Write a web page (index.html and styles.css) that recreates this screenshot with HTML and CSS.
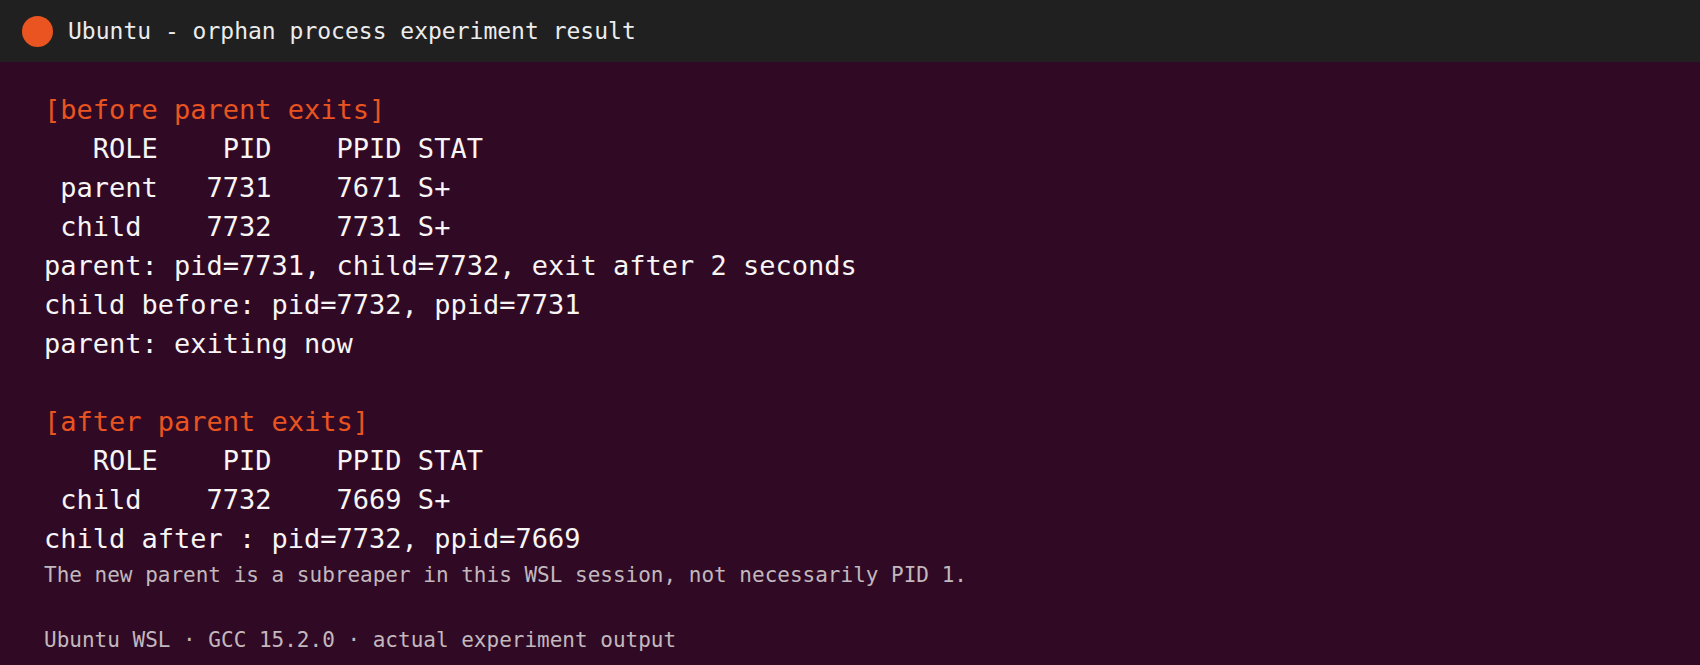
FILE: index.html
```html
<!DOCTYPE html>
<html lang="en">
<head>
<meta charset="utf-8">
<title>Ubuntu - orphan process experiment result</title>
<link rel="stylesheet" href="styles.css">
</head>
<body>
<div class="window">
  <header class="titlebar">
    <span class="dot"></span>
    <span class="title">Ubuntu - orphan process experiment result</span>
  </header>
  <main class="terminal">
    <div class="out">
      <div class="line section">[before parent exits]</div>
      <div class="line">   ROLE    PID    PPID STAT</div>
      <div class="line"> parent   7731    7671 S+</div>
      <div class="line"> child    7732    7731 S+</div>
      <div class="line">parent: pid=7731, child=7732, exit after 2 seconds</div>
      <div class="line">child before: pid=7732, ppid=7731</div>
      <div class="line">parent: exiting now</div>
      <div class="line"> </div>
      <div class="line section">[after parent exits]</div>
      <div class="line">   ROLE    PID    PPID STAT</div>
      <div class="line"> child    7732    7669 S+</div>
      <div class="line">child after : pid=7732, ppid=7669</div>
    </div>
    <p class="note">The new parent is a subreaper in this WSL session, not necessarily PID 1.</p>
    <p class="footer">Ubuntu WSL · GCC 15.2.0 · actual experiment output</p>
  </main>
</div>
</body>
</html>
```
FILE: styles.css
```css
html, body {
  margin: 0;
  padding: 0;
  background: #300a24;
}
body {
  width: 1700px;
  height: 665px;
  overflow: hidden;
  font-family: "DejaVu Sans Mono", "Liberation Mono", monospace;
}
.window {
  display: flex;
  flex-direction: column;
  height: 665px;
}
.titlebar {
  height: 62px;
  background: #202020;
  display: flex;
  align-items: center;
  padding-left: 22px;
  gap: 15px;
  flex-shrink: 0;
}
.dot {
  width: 31px;
  height: 31px;
  border-radius: 50%;
  background: #e95420;
  flex-shrink: 0;
}
.title {
  font-size: 23px;
  color: #ececec;
  white-space: pre;
}
.terminal {
  flex: 1;
  background: #300a24;
  padding: 28px 44px 0;
}
.out {
  font-size: 27px;
  line-height: 39px;
  color: #f7f5f6;
}
.line {
  white-space: pre;
  height: 39px;
}
.section {
  color: #e95420;
}
.note {
  margin: 1px 0 0;
  font-size: 21px;
  line-height: 32px;
  color: #c2b8be;
  white-space: pre;
}
.footer {
  margin: 33px 0 0;
  font-size: 21px;
  line-height: 32px;
  color: #c2b8be;
  white-space: pre;
}
```
